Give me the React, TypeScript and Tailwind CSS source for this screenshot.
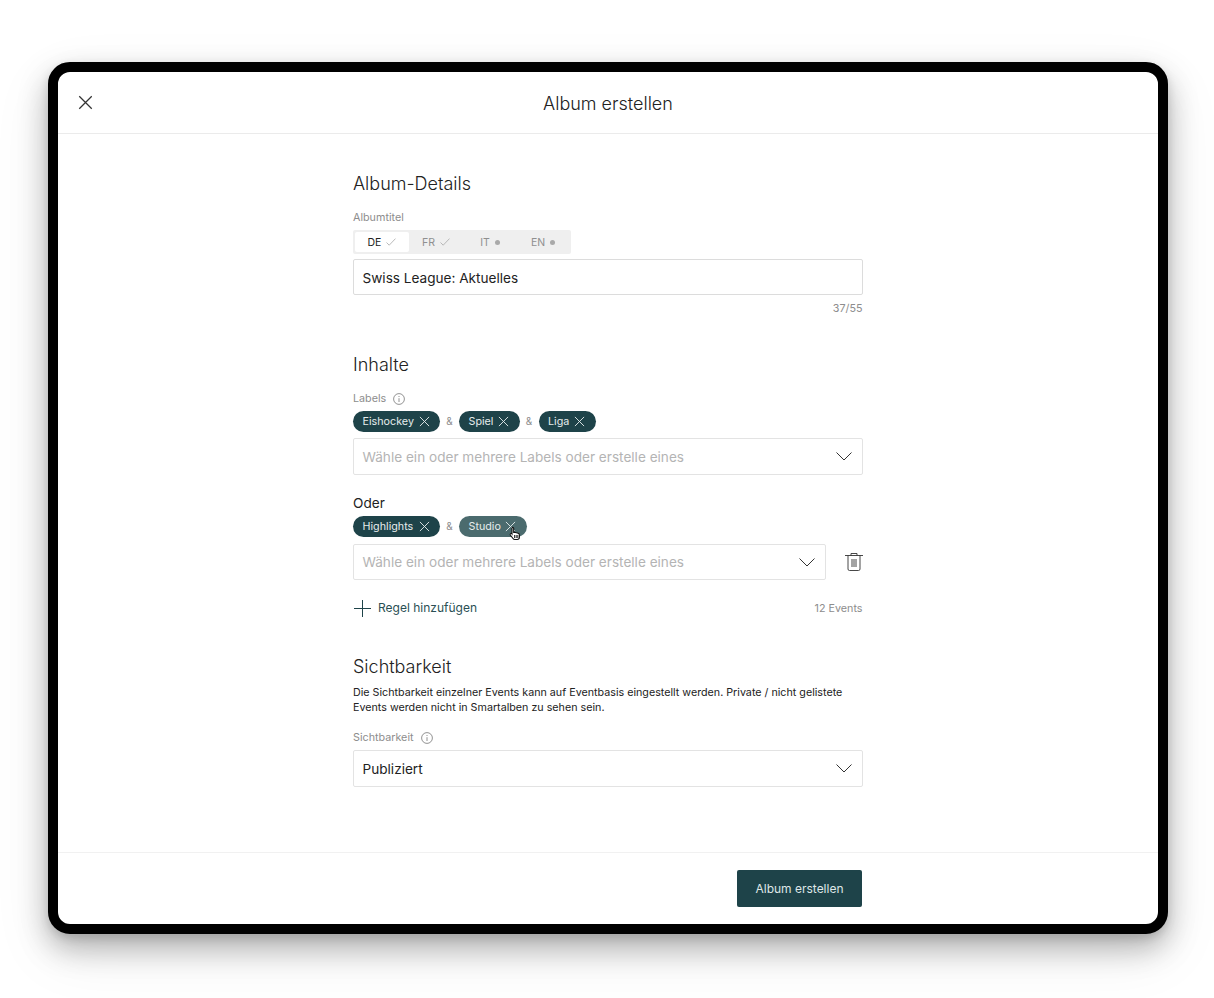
import React from "react";

const X = ({ s = 12, className = "" }: { s?: number; className?: string }) => (
  <svg width={s} height={s} viewBox="0 0 12 12" fill="none" stroke="currentColor" strokeWidth={1} className={className}>
    <path d="M1 1l10 10M11 1L1 11" />
  </svg>
);

const Chevron = () => (
  <svg width="16" height="9" viewBox="0 0 16 9" fill="none" stroke="#333" strokeWidth={1}>
    <path d="M0.5 0.5L8 8l7.5-7.5" />
  </svg>
);

const Info = () => (
  <svg width="12" height="12" viewBox="0 0 12 12" fill="none" stroke="#777" strokeWidth={0.8}>
    <circle cx="6" cy="6" r="5.4" />
    <path d="M6 5.2V9M6 3v1" />
  </svg>
);

const Check = () => (
  <svg width="10" height="8" viewBox="0 0 10 8" fill="none" stroke="#a8a8a8" strokeWidth={0.8}>
    <path d="M0.5 4.5L3.2 7.2 9.5 0.6" />
  </svg>
);

const Dot = () => <span className="w-[5px] h-[5px] rounded-full bg-[#a9a9a9]" />;

const Chip = ({ label, w, light }: { label: string; w: string; light?: boolean }) => (
  <span className={`${w} ${light ? "bg-[#4b6b6e]" : "bg-[#1e4349]"} h-[21px] rounded-full flex items-center justify-between pl-[9.5px] pr-[10.5px] text-[10.75px] text-[#e6ecec]`}>
    <span className="pt-[2px]">{label}</span>
    <X s={11} className={light ? "mr-[1px]" : ""} />
  </span>
);

const Amp = () => <span className="text-[10px] text-[#8d8d8d] w-[19px] text-center">&amp;</span>;

const Select = ({ text, placeholder, nudge, className = "" }: { text: string; placeholder?: boolean; nudge?: boolean; className?: string }) => (
  <div className={`h-[37px] border border-[#e3e3e3] rounded-[2px] flex items-center justify-between pl-[8.5px] pr-[10px] text-[13.6px] ${placeholder ? "text-[#b4b4b4]" : "text-[#222]"} ${className}`}>
    <span className={nudge ? "pt-[2px]" : ""}>{text}</span>
    <Chevron />
  </div>
);

const Tab = ({ code, mark, active, w }: { code: string; mark: React.ReactNode; active?: boolean; w: string }) => (
  <span className={`${w} h-[20px] flex items-center justify-center gap-[5px] text-[10.5px] ${active ? "bg-white text-[#222] rounded-[2px]" : "text-[#8f8f8f]"}`}>
    <span className="pt-[2px]">{code}</span>
    {mark}
  </span>
);

export default function App() {
  return (
    <div className="w-[1214px] h-[998px] bg-white pt-[62px] pl-[48px] overflow-hidden" style={{ fontFamily: "Inter, 'Liberation Sans', sans-serif" }}>
      <div className="w-[1120px] h-[872px] border-[10px] border-black rounded-[22px] bg-white overflow-hidden shadow-[0_14px_30px_rgba(0,0,0,0.28),0_4px_10px_rgba(0,0,0,0.12),0_20px_60px_rgba(0,0,0,0.08)] flex flex-col">
        <header className="h-[62px] shrink-0 border-b border-[#ebebeb] flex items-center relative">
          <X s={15} className="ml-[20px] -mt-[1px] text-[#333]" />
          <h1 className="absolute inset-x-0 text-center text-[18px] font-light text-[#222] pt-[2px]">Album erstellen</h1>
        </header>

        <main className="flex-1 pl-[295px]">
          <div className="w-[509.5px]">
            <h2 className="mt-[38px] h-[24px] leading-[24px] text-[18px] font-light text-[#222]">Album-Details</h2>
            <div className="mt-[15px] h-[14px] leading-[14px] text-[10.75px] text-[#8d8d8d]">Albumtitel</div>
            <div className="mt-[5px] w-[218px] h-[24px] bg-[#efefef] rounded-[2px] flex items-center pl-[2px]">
              <Tab code="DE" active w="w-[54px]" mark={<Check />} />
              <Tab code="FR" w="w-[54px]" mark={<Check />} />
              <Tab code="IT" w="w-[54px]" mark={<Dot />} />
              <Tab code="EN" w="w-[52px]" mark={<Dot />} />
            </div>
            <div className="mt-[5px] h-[36px] border border-[#dcdcdc] rounded-[2px] flex items-center pl-[8.5px] text-[13.6px] text-[#222]"><span className="pt-[2px]">Swiss League: Aktuelles</span></div>
            <div className="mt-[8px] text-right text-[10.75px] leading-[12px] text-[#8d8d8d]">37/55</div>

            <h2 className="mt-[38px] h-[24px] leading-[24px] text-[18px] font-light text-[#222]">Inhalte</h2>
            <div className="mt-[15px] h-[14px] flex items-center gap-[7px] text-[10.75px] text-[#8d8d8d]">Labels <Info /></div>
            <div className="mt-[5px] flex items-center">
              <Chip label="Eishockey" w="w-[87px]" />
              <Amp />
              <Chip label="Spiel" w="w-[60.5px]" />
              <Amp />
              <Chip label="Liga" w="w-[57px]" />
            </div>
            <Select className="mt-[6px]" text="Wähle ein oder mehrere Labels oder erstelle eines" placeholder nudge />

            <div className="mt-[20px] h-[17px] leading-[17px] text-[13.6px] text-[#222]">Oder</div>
            <div className="mt-[4px] flex items-center">
              <Chip label="Highlights" w="w-[87px]" />
              <Amp />
              <span className="relative">
                <Chip label="Studio" w="w-[68px]" light />
                <svg width="12" height="15" viewBox="0 0 12 15" className="absolute left-[50px] top-[10px]">
                  <path d="M3.5 1.2c.7 0 1.2.5 1.2 1.2v4l1-.1 3.4.9c.8.3 1.3.9 1.3 1.7v2.4c0 1.2-1 2.2-2.2 2.2H5.8c-.8 0-1.4-.4-1.8-1L1.3 9c-.3-.6-.1-1.1.4-1.4.5-.2 1 0 1.3.4V2.4c0-.7 0-1.2.5-1.2z" fill="#fff" stroke="#111" strokeWidth="1.1" />
                  <path d="M5.6 9v3M7.2 9v3M8.8 9v3" stroke="#111" strokeWidth="0.9" />
                </svg>
              </span>
            </div>
            <div className="mt-[7px] flex items-center justify-between">
              <Select className="w-[473px] !h-[36px]" text="Wähle ein oder mehrere Labels oder erstelle eines" placeholder />
              <svg width="18" height="18" viewBox="0 0 18 18" fill="none" stroke="#333" strokeWidth="0.9">
                <path d="M0 2.5h18M6 2.5V.5h6v2M3 2.5V16a1.5 1.5 0 001.5 1.5h9A1.5 1.5 0 0015 16V2.5M7 6v8M9 6v8M11 6v8" />
              </svg>
            </div>
            <div className="mt-[18px] h-[20px] flex items-center justify-between">
              <span className="flex items-center text-[12px] text-[#2a4f54]">
                <svg width="17" height="17" viewBox="0 0 17 17" fill="none" stroke="#1e4349" strokeWidth="1" className="ml-[1px] mr-[7px]">
                  <path d="M8.5 0v17M0 8.5h17" />
                </svg>
                Regel hinzufügen
              </span>
              <span className="text-[10.75px] text-[#8d8d8d] pt-[2px]">12 Events</span>
            </div>

            <h2 className="mt-[37px] h-[24px] leading-[24px] text-[18px] font-light text-[#222]">Sichtbarkeit</h2>
            <p className="mt-[6px] text-[10.72px] leading-[15px] text-[#222]">Die Sichtbarkeit einzelner Events kann auf Eventbasis eingestellt werden. Private / nicht gelistete Events werden nicht in Smartalben zu sehen sein.</p>
            <div className="mt-[16px] h-[14px] flex items-center gap-[7px] text-[10.75px] text-[#8d8d8d]">Sichtbarkeit <Info /></div>
            <Select className="mt-[5px]" text="Publiziert" nudge />
          </div>
        </main>

        <footer className="h-[72px] shrink-0 border-t border-[#f1f1f1] flex items-start justify-end pr-[296px] pt-[17px]">
          <button className="w-[125px] h-[37px] bg-[#1e4349] rounded-[2px] text-[12px] text-[#dfe7e7]">Album erstellen</button>
        </footer>
      </div>
    </div>
  );
}
